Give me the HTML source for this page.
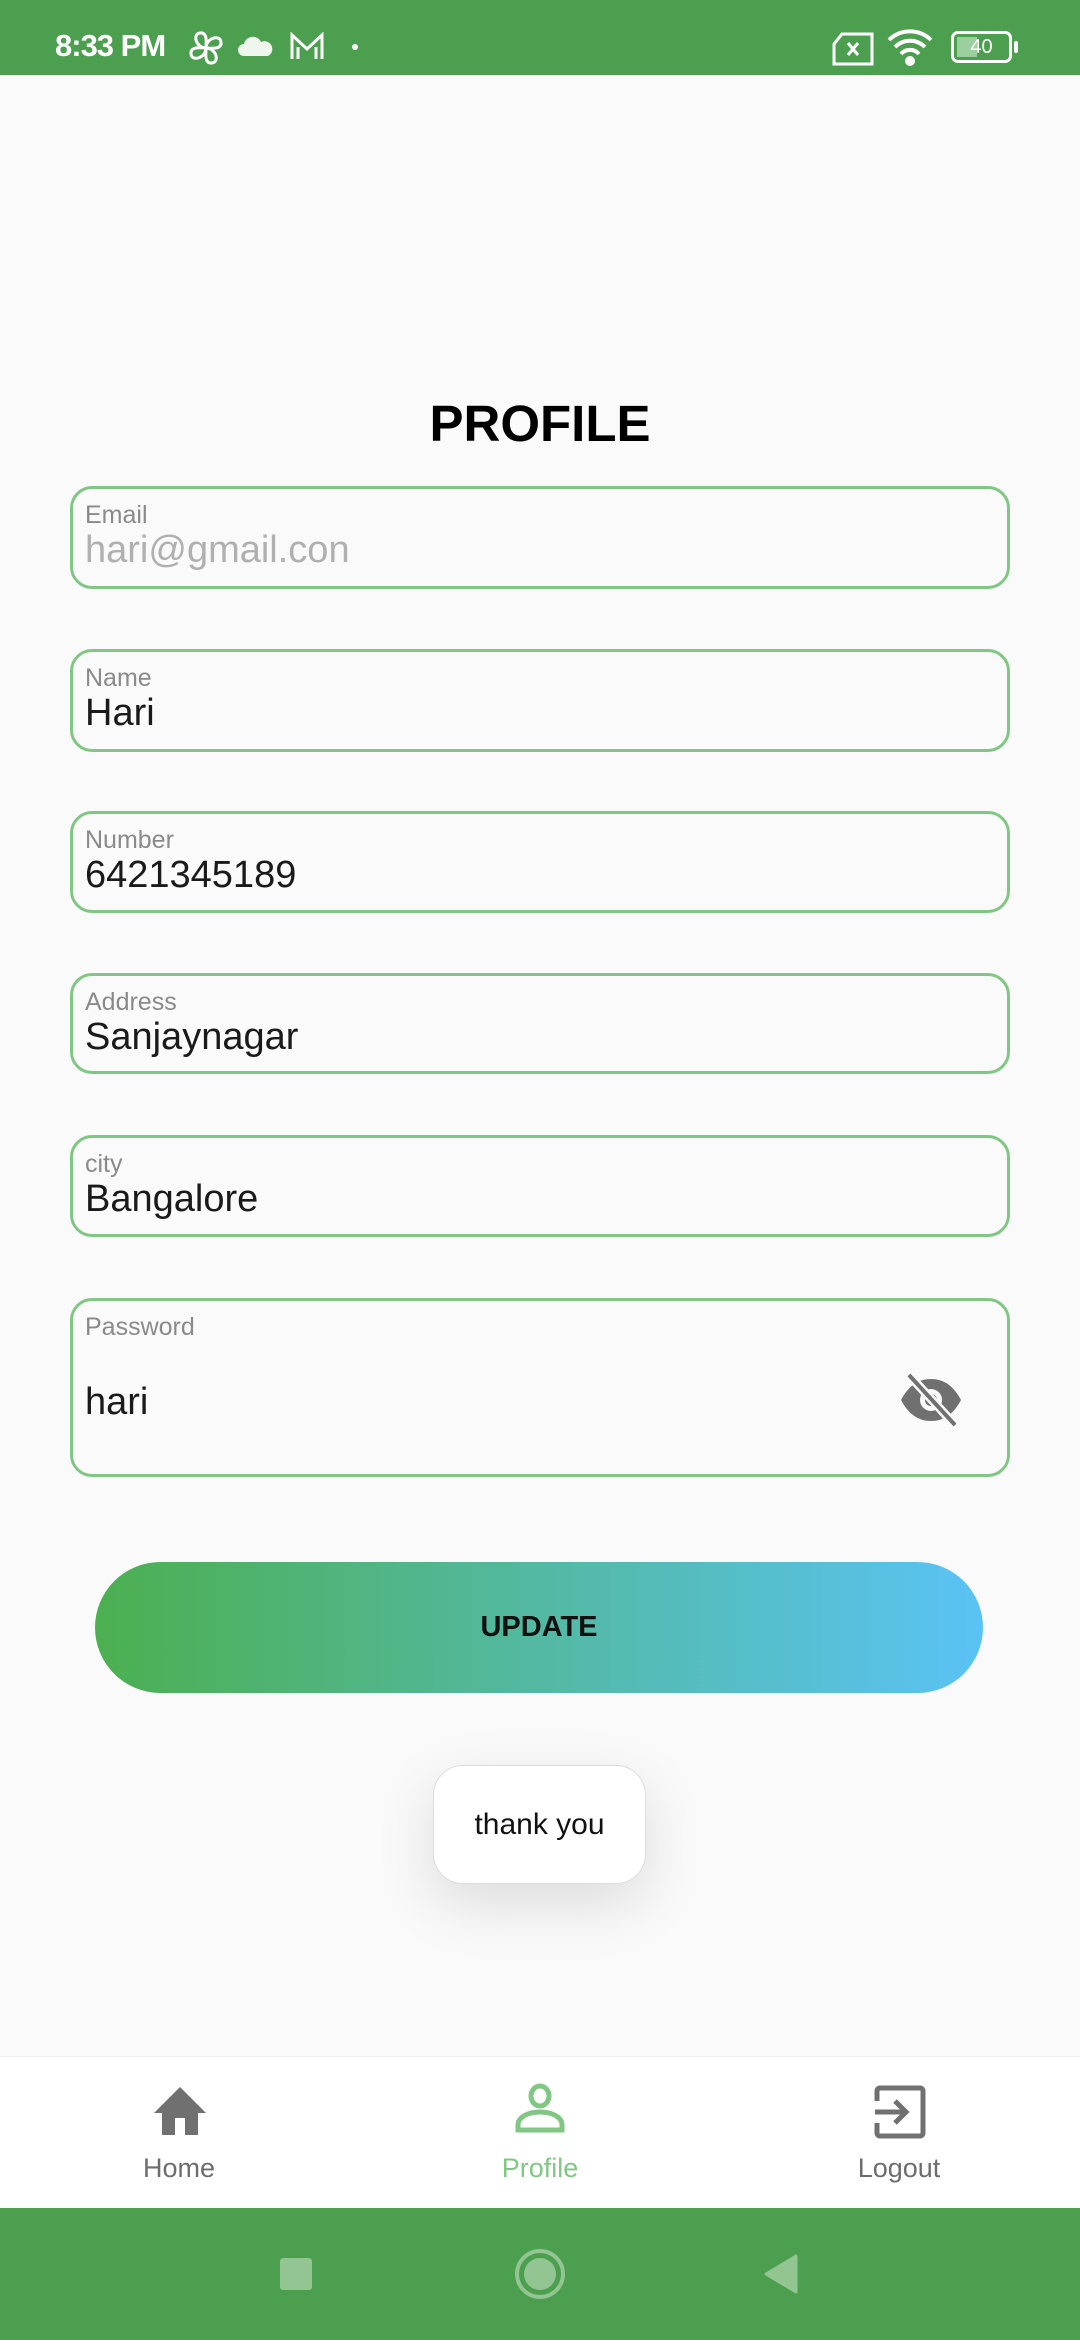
<!DOCTYPE html>
<html><head><meta charset="utf-8"><style>
*{margin:0;padding:0;box-sizing:border-box}
body{width:1080px;height:2340px;background:#fafafa;font-family:"Liberation Sans",Roboto,sans-serif;position:relative;overflow:hidden}
.sb{position:absolute;left:0;top:0;width:1080px;height:75px;background:#4b9f4f;color:#fff}
.title{position:absolute;top:394px;width:1080px;text-align:center;font-weight:bold;font-size:51px;color:#000}
.f{position:absolute;left:70px;width:940px;border:3.5px solid #81c784;border-radius:22px;background:#fafafa}
.f .l{position:absolute;left:12px;top:12px;font-size:25px;color:#8a8a8a}
.f .v{position:absolute;left:12px;top:40px;font-size:38px;color:#1a1a1a}
.btn{position:absolute;left:95px;top:1562px;width:888px;height:131px;border-radius:66px;background:linear-gradient(90deg,#4caf50,#5ac3f5);text-align:center;line-height:131px;font-size:29px;font-weight:bold;color:#111}
.toast{position:absolute;left:433px;top:1765px;width:213px;height:119px;background:#fff;border:1px solid #ddd;border-radius:30px;box-shadow:0 20px 60px rgba(0,0,0,0.12);text-align:center;line-height:117px;font-size:30px;color:#111}
.nav{position:absolute;left:0;top:2056px;width:1080px;height:152px;background:#fff;border-top:1px solid #eee}
.ni{position:absolute;top:0;width:200px;text-align:center}
.ni span{position:absolute;top:96px;left:0;width:200px;font-size:27px;color:#6d6d6d}
.sys{position:absolute;left:0;top:2208px;width:1080px;height:132px;background:#4b9f4f}
</style></head><body>
<div class="sb">
<div style="position:absolute;left:55px;top:28px;font-size:31px;font-weight:bold;letter-spacing:-1px">8:33 PM</div>
<svg style="position:absolute;left:186px;top:30px" width="40" height="36" viewBox="0 0 40 36" fill="none" stroke="#fff" stroke-width="3"><path d="M20 18C10 18 6 4 14 3s6 10 6 15zM20 18c10 0 14 14 6 15s-6-10-6-15zM20 18c0-10 14-14 15-6s-10 6-15 6zM20 18c0 10-14 14-15 6s10-6 15-6z"/></svg>
<svg style="position:absolute;left:238px;top:34px" width="36" height="22" viewBox="0 0 36 22"><path d="M6 22a6 6 0 010-12 9 9 0 0117-2 7 7 0 017 14z" fill="#eef6ee"/></svg>
<svg style="position:absolute;left:290px;top:32px" width="34" height="28" viewBox="0 0 34 28" fill="none" stroke="#fff" stroke-width="3"><path d="M2 27V3l15 14L32 3v24M8 27V15M26 27V15"/></svg>
<div style="position:absolute;left:352px;top:44px;width:6px;height:6px;border-radius:3px;background:#fff"></div>
<svg style="position:absolute;left:832px;top:32px" width="42" height="34" viewBox="0 0 42 34" fill="none" stroke="#fff" stroke-width="3"><path d="M10 2h30v30H2V12z"/><path d="M16 11l10 12M26 11L16 23"/></svg>
<svg style="position:absolute;left:886px;top:28px" width="48" height="38" viewBox="0 0 48 38" fill="none" stroke="#fff" stroke-width="4"><path d="M3 12a30 30 0 0142 0M9 19a21 21 0 0130 0M15 26a12 12 0 0118 0"/><circle cx="24" cy="33" r="3" fill="#fff"/></svg>
<div style="position:absolute;left:951px;top:31px;width:61px;height:32px;border:3px solid #fff;border-radius:7px"><div style="position:absolute;left:3px;top:3px;width:20px;height:20px;background:#9ccf9e"></div><div style="position:absolute;left:0;top:0;width:55px;text-align:center;font-size:20px;line-height:26px;color:#fff">40</div></div>
<div style="position:absolute;left:1014px;top:41px;width:4px;height:12px;background:#fff;border-radius:2px"></div>
</div>
<div class="title">PROFILE</div>
<div class="f" style="top:486px;height:103px"><div class="l">Email</div><div class="v" style="color:#b0b0b0">hari@gmail.con</div></div>
<div class="f" style="top:649px;height:103px"><div class="l">Name</div><div class="v">Hari</div></div>
<div class="f" style="top:811px;height:102px"><div class="l">Number</div><div class="v">6421345189</div></div>
<div class="f" style="top:973px;height:101px"><div class="l">Address</div><div class="v">Sanjaynagar</div></div>
<div class="f" style="top:1135px;height:102px"><div class="l">city</div><div class="v">Bangalore</div></div>
<div class="f" style="top:1298px;height:179px"><div class="l">Password</div><div class="v" style="top:80px">hari</div>
<svg style="position:absolute;left:826px;top:70px" width="64" height="58" viewBox="0 0 64 58"><path d="M2 29C10 14 20 8 32 8s22 6 30 21c-8 15-18 21-30 21S10 44 2 29z" fill="#707070"/><circle cx="32" cy="29" r="11" fill="#fafafa"/><circle cx="32" cy="29" r="6" fill="#707070"/><path d="M10 4l46 50" stroke="#fafafa" stroke-width="9"/><path d="M10 4l46 50" stroke="#707070" stroke-width="4"/></svg>
</div>
<div class="btn">UPDATE</div>
<div class="toast">thank you</div>
<div class="nav">
<div class="ni" style="left:79px"><svg style="position:absolute;left:73px;top:28px" width="56" height="50" viewBox="0 0 56 50"><path d="M28 2L2 28h8v22h13V33h10v17h13V28h8z" fill="#707070"/></svg><span>Home</span></div>
<div class="ni" style="left:440px"><svg style="position:absolute;left:75px;top:26px" width="50" height="50" viewBox="0 0 50 50" fill="none" stroke="#81c784" stroke-width="5"><ellipse cx="25" cy="13" rx="9" ry="10"/><path d="M3 47v-5c0-8 10-13 22-13s22 5 22 13v5z"/></svg><span style="color:#81c784">Profile</span></div>
<div class="ni" style="left:799px"><svg style="position:absolute;left:74px;top:28px" width="54" height="54" viewBox="0 0 54 54" fill="none" stroke="#707070" stroke-width="5"><path d="M4 16V6a3 3 0 013-3h40a3 3 0 013 3v42a3 3 0 01-3 3H7a3 3 0 01-3-3V38"/><path d="M2 27h30M22 16l11 11-11 11"/></svg><span>Logout</span></div>
</div>
<div class="sys">
<div style="position:absolute;left:280px;top:50px;width:32px;height:32px;background:#93c593;border-radius:3px"></div>
<div style="position:absolute;left:515px;top:41px;width:50px;height:50px;border:4px solid #93c593;border-radius:50%"><div style="position:absolute;left:5px;top:5px;width:32px;height:32px;border-radius:50%;background:#93c593"></div></div>
<svg style="position:absolute;left:762px;top:46px" width="36" height="40" viewBox="0 0 36 40"><path d="M34 2v36L4 20z" fill="#93c593" stroke="#93c593" stroke-width="3" stroke-linejoin="round"/></svg>
</div>
</body></html>
